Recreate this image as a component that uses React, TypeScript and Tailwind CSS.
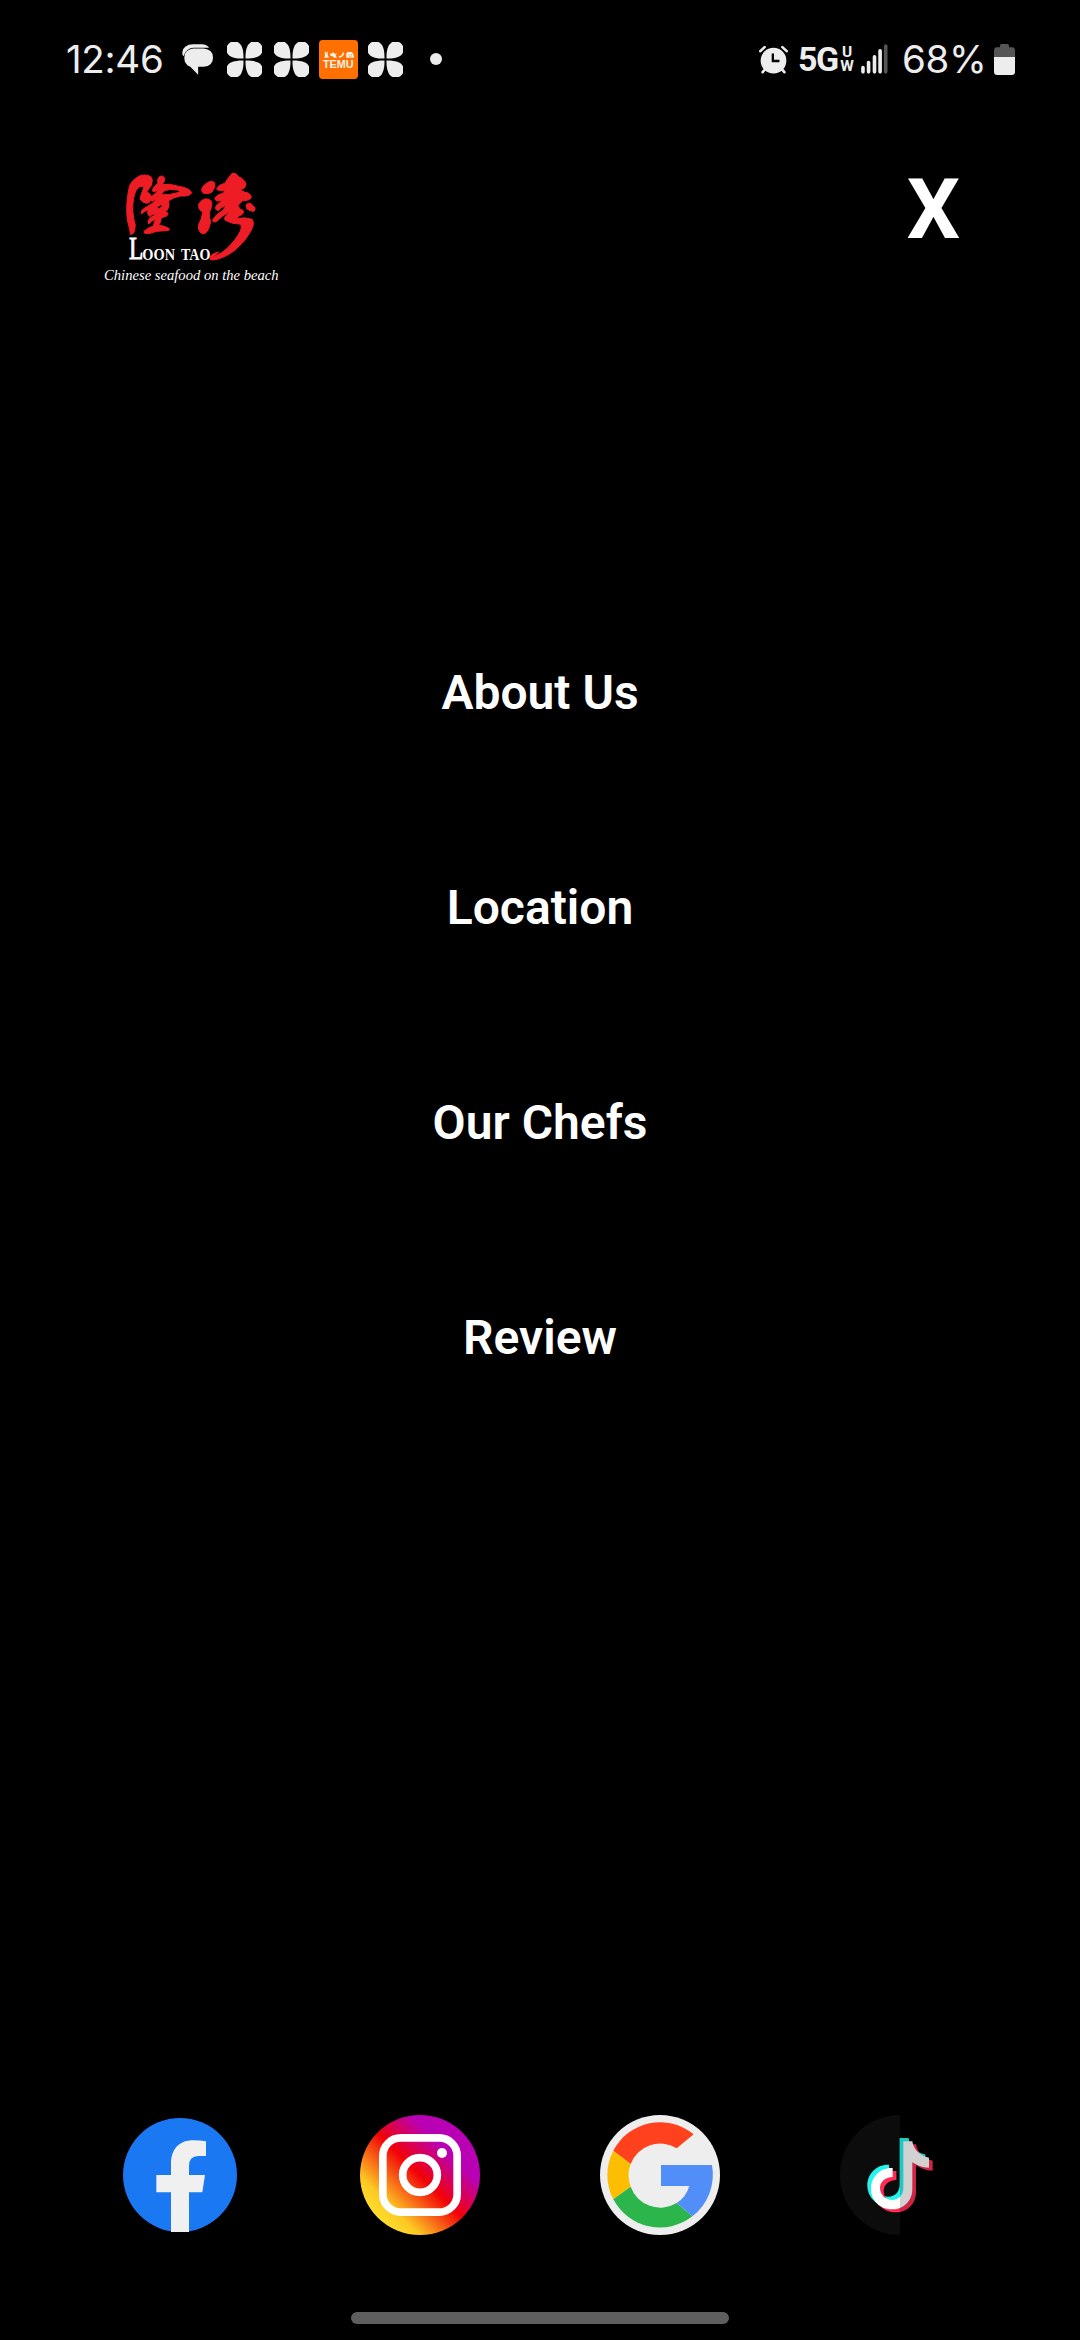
import React from "react";

const INK = "#ededed";

function ChatIcon() {
  return (
    <svg viewBox="0 0 94 92" className="ml-[15px] h-[31px] w-[31px] shrink-0">
      <path d="M34 0H60Q76 1 82 10H34Q12 12 5 36Q0 32 1 24Q4 1 34 0Z" fill={INK} />
      <path d="M34 13H66Q94 16 94 40Q94 66 66 68H49V92L25 68Q7 62 7 40Q8 16 34 13Z" fill={INK} />
    </svg>
  );
}

function CloverIcon({ className }: { className: string }) {
  return (
    <svg viewBox="0 0 104 104" className={className} fill={INK}>
      {[0, 90, 180, 270].map((angle) => (
        <path
          key={angle}
          transform={`rotate(${angle} 52 52)`}
          d="M49 49C44 49 24 50 10 42A23.500 23.500 0 1 1 42 10C50 24 49 44 49 49Z"
        />
      ))}
    </svg>
  );
}

function TemuIcon() {
  return (
    <svg viewBox="0 0 117 117" className="ml-[10px] h-[39px] w-[39px] shrink-0">
      <rect width="117" height="117" rx="11" fill="#ff7000" />
      <g fill="#fff1e4">
        <path d="M16 53L18 44L17 35H20L22 42L24 35H27L26 44L30 53Z" />
        <path d="M33 38L38 42L42 36L48 42L53 39L50 48L55 53H46L40 49L34 47Z" />
        <path d="M59 49Q68 49 72 36L76 40Q72 53 61 53Z" />
        <path d="M82 53L81 42L86 36H98L103 42L105 53Z" />
      </g>
      <path d="M88 44H91M96 44H99M90 48Q94 50 98 48" stroke="#ff7000" strokeWidth="2" fill="none" />
      <text
        x="12"
        y="84"
        textLength="92"
        lengthAdjust="spacingAndGlyphs"
        fill="#fff1e4"
        className="font-['Liberation_Sans',sans-serif] text-[34px] font-bold"
      >
        TEMU
      </text>
    </svg>
  );
}

function AlarmIcon() {
  return (
    <svg viewBox="57 58 88 87" className="h-[29px] w-[29px] shrink-0">
      <g stroke={INK} strokeWidth="8" strokeLinecap="round">
        <path d="M61 76L74 64M141 76L128 64M68 140L78 128M134 140L124 128" />
      </g>
      <circle cx="101" cy="105" r="39" fill={INK} />
      <path d="M99 83V106H119" stroke="#000" strokeWidth="7" fill="none" />
    </svg>
  );
}

function SignalIcon() {
  return (
    <svg viewBox="0 0 82 90" className="ml-[8px] h-[30px] w-[27px] shrink-0" strokeWidth="11" strokeLinecap="round">
      <path d="M6 71V84M23 56V84M41 38V84M58 20V84" stroke={INK} />
      <path d="M75 6V84" stroke="#555" />
    </svg>
  );
}

function BatteryIcon() {
  return (
    <svg viewBox="0 0 64 94" className="h-[31px] w-[21px] shrink-0">
      <path d="M18 10V5Q18 0 23 0H41Q46 0 46 5V10H56Q64 11 64 20V40H0V20Q0 11 8 10Z" fill="#555" />
      <path d="M0 39H64V84Q64 94 54 94H10Q0 94 0 84Z" fill={INK} />
    </svg>
  );
}

function StatusBar() {
  return (
    <div className="flex h-[118px] items-center justify-between pr-[65px] pl-[66px] text-[#ededed]">
      <div className="flex items-center">
        <span className="w-[101px] font-['Inter',sans-serif] text-[38.5px] leading-none font-normal tracking-[-0.3px] whitespace-nowrap">12:46</span>
        <ChatIcon />
        <CloverIcon className="ml-[14px] h-[35px] w-[35px] shrink-0" />
        <CloverIcon className="ml-[12px] h-[35px] w-[35px] shrink-0" />
        <TemuIcon />
        <CloverIcon className="ml-[10px] h-[35px] w-[35px] shrink-0" />
        <span className="ml-[27px] h-[12px] w-[12px] rounded-full bg-[#ededed]" />
      </div>
      <div className="flex items-center">
        <AlarmIcon />
        <span className="ml-[10px] w-[43px] font-['Roboto',sans-serif] text-[34px] leading-none font-bold tracking-[-1.5px] whitespace-nowrap">5G</span>
        <span className="flex w-[12px] flex-col items-center font-['Roboto',sans-serif] text-[15.5px] leading-[14px] font-bold">
          <span>U</span>
          <span>W</span>
        </span>
        <SignalIcon />
        <span className="ml-[14px] w-[92px] font-['Inter',sans-serif] text-[38.5px] leading-none font-normal tracking-[-0.3px] whitespace-nowrap">68%</span>
        <BatteryIcon />
      </div>
    </div>
  );
}

function RestaurantLogo() {
  return (
    <svg viewBox="0 0 600 405" className="h-[135px] w-[200px]" role="img" aria-label="Loon Tao">
      <g fill="#ee1c24" stroke="#ee1c24" strokeWidth="3" strokeLinejoin="round">
        <path d="M119 76Q128 58 148 48Q170 40 184 52Q190 60 184 76L170 96Q186 102 184 116Q182 128 170 130Q156 128 150 116Q154 100 162 82Q150 72 138 92Q128 112 128 150Q130 178 136 196L132 218L122 224Q118 200 112 180Q106 130 119 76Z" />
        <path
          d="M208 50Q220 44 224 56Q226 66 214 74Q240 70 262 78Q300 84 305 98Q300 110 272 108Q250 112 236 122Q240 140 232 150L226 156Q240 158 230 168L214 174Q212 188 206 196Q222 196 238 206Q240 214 222 212Q198 212 180 220Q160 224 162 214Q172 204 190 198L196 178Q182 184 176 192Q170 186 180 174L200 162Q184 160 180 170Q168 160 176 150Q164 152 154 162Q150 152 164 144Q190 132 206 112L188 124Q178 122 182 112Q196 100 208 90L190 96Q184 90 192 80L204 70Q200 58 208 50ZM222 92L214 104Q240 106 262 98Q276 94 262 90Q240 86 222 92ZM212 134L200 142L208 146L218 138Z"
          fillRule="evenodd"
        />
        <path d="M344 74Q362 58 374 68Q378 80 366 96Q350 106 338 98Q330 86 344 74Z" />
        <path d="M326 132Q340 112 356 118Q370 122 364 142Q356 156 358 172Q366 186 354 210Q344 228 332 218Q322 208 326 194Q336 176 338 156Q324 150 326 132Z" />
        <path d="M426 40Q436 36 446 50Q464 58 468 72Q466 88 450 88L462 96Q482 98 484 112Q480 122 458 122L444 136L450 148Q466 150 458 162Q444 168 440 176Q466 170 486 178Q496 190 482 214Q466 244 440 266Q410 292 376 299Q358 302 360 294Q398 282 422 254Q448 226 454 204Q456 194 448 192Q428 192 412 184Q396 178 410 166L420 154Q396 168 380 184Q368 190 368 180Q376 164 400 150L408 136Q394 142 384 152Q374 150 378 138L398 120Q378 128 374 116Q380 104 400 100L404 92Q386 94 380 88Q382 76 404 70Q412 58 426 40Z" />
        <path d="M468 134Q480 124 488 136Q500 146 492 154Q480 154 470 146Z" />
        <path d="M360 290Q366 280 386 276Q376 286 362 296Z" />
      </g>
      <g fill="#fff" className="font-['Liberation_Serif',serif]">
        <text x="117" y="298" textLength="43" lengthAdjust="spacingAndGlyphs" fontSize="92" stroke="#fff" strokeWidth="2.500">L</text>
        <text x="157" y="299" textLength="98" lengthAdjust="spacingAndGlyphs" fontSize="53" fontWeight="700">OON</text>
        <text x="273" y="299" textLength="88" lengthAdjust="spacingAndGlyphs" fontSize="53" fontWeight="700">TAO</text>
        <text x="42" y="360" textLength="524" lengthAdjust="spacingAndGlyphs" fontSize="43" fontStyle="italic">
          Chinese seafood on the beach
        </text>
      </g>
    </svg>
  );
}

function FacebookIcon() {
  return (
    <svg viewBox="30 45 360 360" className="h-[120px] w-[120px]">
      <circle cx="210" cy="225" r="171" fill="#1a78f2" />
      <path
        d="M183 396V277H139V225H183V192C183 146 208 121 250 121Q270 121 288 124V168H265Q237 168 237 198V225H285L277 277H237V396Z"
        fill="#f0f0f0"
      />
    </svg>
  );
}

function InstagramIcon() {
  return (
    <svg viewBox="30 45 360 360" className="h-[120px] w-[120px]">
      <defs>
        <linearGradient id="ig" gradientUnits="userSpaceOnUse" x1="83" y1="352" x2="337" y2="98">
          <stop offset="0" stopColor="#ffdd2d" />
          <stop offset="0.14" stopColor="#fdc923" />
          <stop offset="0.5" stopColor="#f20008" />
          <stop offset="0.8" stopColor="#b900b4" />
          <stop offset="1" stopColor="#b900b4" />
        </linearGradient>
      </defs>
      <circle cx="210" cy="225" r="180" fill="url(#ig)" />
      <g fill="none" stroke="#fff" strokeWidth="23">
        <rect x="98.500" y="113.500" width="223" height="223" rx="54" />
        <circle cx="210" cy="225" r="52" />
      </g>
      <circle cx="276" cy="159" r="15" fill="#fff" />
    </svg>
  );
}

function GoogleIcon() {
  return (
    <svg viewBox="30 45 360 360" className="h-[120px] w-[120px]">
      <circle cx="210" cy="225" r="180" fill="#eee" />
      <path d="M70 152A158 158 0 0 1 311 103L260 145A94 94 0 0 0 122 192Z" fill="#ff411e" />
      <path d="M70 152A158 158 0 0 0 70 298L122 260A94 94 0 0 1 122 192Z" fill="#fdbd00" />
      <path d="M70 298A158 158 0 0 0 307 349L260 309A94 94 0 0 1 122 260Z" fill="#2bb54a" />
      <path d="M213 195H366A158 158 0 0 1 307 349L260 309Q288 292 298 258H213Z" fill="#518ef8" />
    </svg>
  );
}

const NOTE =
  "M220 124H247C250 148 270 168 297 173V203C278 203 260 196 247 187V267C247 302 222 328 187 328C150 328 123 302 123 266C123 230 152 202 188 204V231C165 231 150 246 150 264C150 285 167 300 186 300C206 300 220 285 220 264Z";

function TiktokIcon() {
  return (
    <svg viewBox="30 45 360 360" className="h-[120px] w-[120px]">
      <path d="M210 45A180 180 0 0 0 210 405Z" fill="#0c0c0c" />
      <path d={NOTE} transform="translate(-11 -10)" fill="#25f4ee" />
      <path d={NOTE} transform="translate(11 9)" fill="#fe2c55" />
      <path d={NOTE} fill="#fff" />
      <path d="M210 45H390V405H210Z" fill="#000" fillOpacity="0.18" />
    </svg>
  );
}

const LINKS = ["About Us", "Location", "Our Chefs", "Review"];

export default function App() {
  return (
    <div className="flex h-[2340px] w-[1080px] flex-col overflow-hidden bg-black font-['Roboto',sans-serif] text-white">
      <StatusBar />
      <header className="flex h-[177px] items-end justify-between pr-[120px] pl-[90px]">
        <RestaurantLogo />
        <button className="mb-[43px] text-[84px] leading-[84px] font-bold">X</button>
      </header>
      <nav className="mt-[290px] flex flex-col items-center">
        {LINKS.map((label) => (
          <a key={label} className="flex h-[215px] items-center text-[48px] leading-none font-semibold">
            {label}
          </a>
        ))}
      </nav>
      <footer className="mt-auto flex flex-col items-center pb-[16px]">
        <div className="grid w-full grid-cols-4 justify-items-center px-[60px]">
          <FacebookIcon />
          <InstagramIcon />
          <GoogleIcon />
          <TiktokIcon />
        </div>
        <div className="mt-[77px] h-[12px] w-[378px] rounded-full bg-[#5e5e5e]" />
      </footer>
    </div>
  );
}
